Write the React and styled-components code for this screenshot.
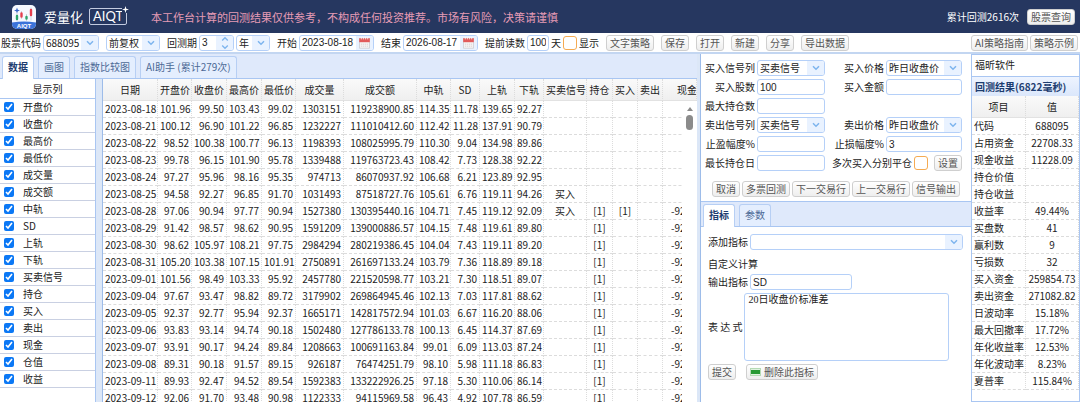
import React from "react"
import styled, { createGlobalStyle, css } from "styled-components"

const navy = "#263760"
const line = "#a9c6f2"
const paleBlue = "#dfe9fb"
const grid = "#dcdcdc"
const sans = `"Noto Sans CJK SC", sans-serif`
const inputFont = `"Liberation Sans", "Noto Sans CJK SC", sans-serif`

const GlobalStyle = createGlobalStyle`
  *, *::before, *::after {
    box-sizing: border-box;
  }

  body {
    margin: 0;
    color: #222;
    background: #fff;
    font: 10px/14px ${sans};
    overflow: hidden;
  }

  button, input, select, textarea {
    margin: 0;
    color: #222;
    font: 10px/14px ${sans};
  }
`

const Page = styled.div`
  display: flex;
  flex-direction: column;
  height: 100vh;
`

const Header = styled.header`
  display: flex;
  flex: none;
  align-items: center;
  height: 33px;
  padding: 0 5px 0 12px;
  color: #fff;
  background: ${navy};
`

const Brand = styled.span`
  margin: 0 6px 0 8px;
  font-size: 13px;
  line-height: 20px;
`

const BrandBox = styled.span`
  position: relative;
  width: 38px;
  height: 17px;
  border: 1px solid #c3cbe0;
  border-radius: 2px;
  font: 13px/15px Lato, sans-serif;
  text-align: center;
`

const Spark = styled.svg`
  position: absolute;
  top: -3px;
  right: -3px;
  background: ${navy};
`

const Warning = styled.p`
  flex: 1;
  margin: 0 0 0 24px;
  color: #e59bb5;
  font-size: 11px;
`

const Count = styled.span`
  margin-right: 8px;
`

const Button = styled.button`
  display: inline-flex;
  flex: none;
  align-items: center;
  justify-content: center;
  gap: 3px;
  height: 16px;
  padding: 0 3px;
  border: 1px solid #cfcfcf;
  border-radius: 3px;
  color: #555;
  background: linear-gradient(#fff, #eee);
  white-space: nowrap;
  cursor: pointer;
`

const Toolbar = styled.div`
  display: flex;
  flex: none;
  align-items: center;
  gap: 7px;
  height: 21px;
  padding: 0 2px 0 1px;
  border-bottom: 2px solid #c3d6f1;
  white-space: nowrap;
`

const Group = styled.div`
  display: flex;
  align-items: center;
  gap: 2px;
`

const Actions = styled(Group)`
  flex: 1;
  gap: 7px;
`

const Field = styled.div`
  position: relative;
  flex: ${props => (props.$width ? "none" : 1)};
  width: ${props => (props.$width ? `${props.$width}px` : "auto")};
  min-width: 0;
  height: 16px;
`

const control = css`
  display: block;
  width: 100%;
  height: 16px;
  padding: 0 2px;
  border: 1px solid #b5d0f8;
  border-radius: 3px;
  outline: 0;
  background: #fff;
`

const Input = styled.input`
  ${control}
  font-family: ${inputFont};
`

const Select = styled.select`
  ${control}
  appearance: none;
`

const Adornment = styled.span`
  position: absolute;
  top: 1px;
  right: 1px;
  bottom: 1px;
  display: flex;
  align-items: center;
  justify-content: center;
  width: 17px;
  border-radius: 0 2px 2px 0;
  background: #e9f2ff;
  pointer-events: none;
`

const OrangeCheck = styled.input`
  appearance: none;
  flex: none;
  width: 14px;
  height: 14px;
  border: 1px solid #f5ab52;
  border-radius: 3px;
  background: #fff;
`

const Main = styled.main`
  display: flex;
  flex: 1;
  min-height: 0;
`

const Workspace = styled.section`
  display: flex;
  flex: 1;
  flex-direction: column;
  min-width: 0;
`

const Tabs = styled.div`
  display: flex;
  flex: none;
  align-items: flex-end;
  gap: 4px;
  height: 25px;
  padding: 0 2px;
  border-bottom: 1px solid ${line};
  background: ${paleBlue};
`

const Tab = styled.button`
  height: ${props => (props.$active ? 23 : 22)}px;
  margin-bottom: ${props => (props.$active ? "-1px" : 0)};
  padding: 0 5px ${props => (props.$active ? 3 : 2)}px;
  border: 1px solid #b7cff4;
  border-bottom: 0;
  border-radius: 3px 3px 0 0;
  color: ${props => (props.$active ? "#1d3d70" : "#4c6a96")};
  background: ${props => (props.$active ? "#fff" : "#e4eefe")};
  font-weight: ${props => (props.$active ? 700 : 400)};
  white-space: nowrap;
  cursor: pointer;
`

const Split = styled.div`
  display: flex;
  flex: 1;
  min-height: 0;
`

const ColumnPicker = styled.div`
  flex: none;
  width: 96px;
  border-right: 1px solid ${line};
`

const PickerTitle = styled.div`
  height: 20px;
  border-bottom: 1px solid ${line};
  line-height: 20px;
  text-align: center;
`

const PickerRow = styled.label`
  display: flex;
  align-items: center;
  gap: 9px;
  height: 17px;
  padding-left: 4px;
  border-bottom: 1px solid #c9d0e2;

  input {
    width: 10px;
    height: 10px;
    accent-color: #0b78f5;
  }
`

const Splitter = styled.div`
  flex: none;
  width: ${props => props.$width}px;
  border-right: 1px solid #9dbce9;
  background: #dce7f7;
`

const TableArea = styled.div`
  position: relative;
  flex: 1;
  min-width: 0;
  overflow: hidden;
`

const Table = styled.table`
  width: 100%;
  border-collapse: separate;
  border-spacing: 0;
  table-layout: fixed;

  th, td {
    overflow: hidden;
    padding: 0 2px;
    border-right: 1px dotted ${grid};
    white-space: nowrap;
  }

  th {
    height: 22px;
    border-bottom: 1px solid #e2e2e2;
    background: linear-gradient(#fafafa, #efefef);
    font-weight: 400;
  }

  td {
    height: 17px;
    border-bottom: 1px dashed ${grid};
    line-height: 16px;
  }
`

const Cell = styled.td`
  text-align: ${props => props.$align};
`

const CashHead = styled.th`
  && {
    padding-left: 14px;
    text-align: left;
  }
`

const CashCell = styled.td`
  && {
    padding-left: 8px;
  }
`

const Scrollbar = styled.div`
  position: absolute;
  top: 22px;
  right: 0;
  bottom: 0;
  display: flex;
  flex-direction: column;
  align-items: center;
  gap: 4px;
  width: 15px;
  padding-top: 6px;
  background: #fff;
`

const Thumb = styled.span`
  width: 7px;
  height: 15px;
  border-radius: 4px;
  background: #8b8b8b;
`

const Center = styled.section`
  display: flex;
  flex: 0 0 25%;
  flex-direction: column;
  min-width: 0;
`

const Form = styled.form`
  display: grid;
  grid-template-columns: 53px 68px 57px 76px;
  align-items: center;
  justify-content: start;
  gap: 3px 2px;
  padding: 6px 8px 0 1px;

  & > label {
    text-align: right;
    white-space: nowrap;
  }
`

const Spread = styled.div`
  grid-column: span 2;
  display: flex;
  align-items: center;
  justify-content: flex-end;
  gap: 2px;

  ${Button} {
    margin-left: 4px;
  }
`

const ButtonRow = styled.div`
  display: flex;
  justify-content: center;
  gap: 2px;
  padding: 10px 0 4px;
`

const Indicator = styled.div`
  display: flex;
  flex: 1;
  flex-direction: column;
  border-top: 1px solid ${line};
`

const IndicatorBody = styled.div`
  display: flex;
  flex-direction: column;
  gap: 3px;
  padding: 7px 8px 0 7px;
`

const Line = styled.div`
  display: flex;
  align-items: center;
  gap: ${props => props.$gap || 2}px;
`

const Caption = styled.div`
  margin-top: 4px;
`

const Expression = styled.textarea`
  display: block;
  width: 205px;
  height: 68px;
  padding: 0 3px;
  border: 1px solid #b5d0f8;
  border-radius: 3px;
  outline: 0;
  font-family: "Liberation Serif", "Noto Sans CJK SC", serif;
  line-height: 12px;
  resize: none;
`

const Results = styled.aside`
  flex: none;
  width: 109px;
  border: 1px solid ${line};
`

const Company = styled.div`
  height: 21px;
  padding: 0 3px;
  line-height: 20px;
`

const ResultTitle = styled.h2`
  height: 20px;
  margin: 0;
  padding: 0 3px;
  border-top: 1px solid ${line};
  color: #1d3d70;
  background: linear-gradient(#eef4ff, #dbe7fb);
  font-size: 10px;
  line-height: 19px;
  white-space: nowrap;
`

const Chevron = () => (
  <Adornment>
    <svg width="8" height="6" viewBox="0 0 8 6" fill="none" stroke="#7db4ee" strokeWidth="1.5">
      <path d="M1 1.2 4 4.2 7 1.2" />
    </svg>
  </Adornment>
)

const Stepper = () => (
  <Adornment>
    <svg width="8" height="14" viewBox="0 0 8 14" fill="none" stroke="#7db4ee" strokeWidth="1.3">
      <path d="M1.2 4.5 4 1.7 6.8 4.5M1.2 9.5 4 12.3 6.8 9.5" />
    </svg>
  </Adornment>
)

const Calendar = () => (
  <Adornment>
    <svg width="11" height="12" viewBox="0 0 11 12">
      <path d="M.5 1.5h10v9.8H.5z" fill="#f5f3f3" stroke="#c9c9cf" strokeWidth=".7" />
      <path d="M.2 1.2h10.6v4H.2z" fill="#e25b5b" />
      <path d="M2.3.2v2.2M4.4.2v2.2M6.6.2v2.2M8.7.2v2.2" stroke="#fff" strokeWidth=".8" />
      <path d="M2 7.2h7M2 9.2h7" stroke="#d6c9cc" strokeWidth=".8" strokeDasharray="1.2 .8" />
    </svg>
  </Adornment>
)

const Logo = () => (
  <svg width="24" height="24" viewBox="0 0 24 24" aria-hidden="true">
    <defs>
      <clipPath id="logo-shape">
        <rect width="24" height="24" rx="5" />
      </clipPath>
    </defs>
    <g clipPath="url(#logo-shape)">
      <rect width="24" height="24" fill="#f6f9ff" />
      <path d="M0 17.5Q12 15.5 24 17.5V24H0z" fill="#3b72d9" />
      <path d="M5 8v8M9.5 6v8M14.5 9v7M19 2.5v13" stroke="#b9b9c6" strokeWidth=".6" />
      <path d="M5 2.5 5.8 4.7 8 5.5 5.8 6.3 5 8.5 4.2 6.3 2 5.5 4.2 4.7z" fill="#3465c9" />
      <g strokeLinecap="round" strokeWidth="2.4">
        <path d="M5 11v3M14.5 12v1.5" stroke="#2da66d" />
        <path d="M9.5 8.5v3M19 5v5" stroke="#e5404f" />
      </g>
      <text x="12" y="22.8" textAnchor="middle" fontFamily="Liberation Sans" fontSize="6" fontWeight="700" fill="#fff">AIQT</text>
    </g>
  </svg>
)

const TextField = ({ id, width, value = "" }) => (
  <Field $width={width}>
    <Input id={id} defaultValue={value} />
  </Field>
)

const SelectField = ({ id, width, value = "", label }) => (
  <Field $width={width}>
    <Select id={id} aria-label={label} defaultValue={value}>
      <option>{value}</option>
    </Select>
    <Chevron />
  </Field>
)

const DateField = ({ id, value }) => (
  <Field $width={75}>
    <Input id={id} defaultValue={value} />
    <Calendar />
  </Field>
)

const pickable = [
  "开盘价", "收盘价", "最高价", "最低价", "成交量", "成交额", "中轨", "SD", "上轨",
  "下轨", "买卖信号", "持仓", "买入", "卖出", "现金", "仓值", "收益",
]

const columns = [
  ["日期", 55], ["开盘价", 34], ["收盘价", 35], ["最高价", 35], ["最低价", 34],
  ["成交量", 48], ["成交额", 73], ["中轨", 34], ["SD", 29], ["上轨", 35],
  ["下轨", 29], ["买卖信号", 43], ["持仓", 26], ["买入", 25], ["卖出", 25],
]

const quotes = `2023-08-18 101.96 99.50 103.43 99.02 1303151 119238900.85 114.35 11.78 139.65 92.27
2023-08-21 100.12 96.90 101.22 96.85 1232227 111010412.60 112.42 11.28 137.91 90.79
2023-08-22 98.52 100.38 100.77 96.13 1198393 108025995.79 110.30 9.04 134.98 89.86
2023-08-23 99.78 96.15 101.90 95.78 1339488 119763723.43 108.42 7.73 128.38 92.22
2023-08-24 97.27 95.96 98.16 95.35 974713 86070937.92 106.68 6.21 123.89 92.95
2023-08-25 94.58 92.27 96.85 91.70 1031493 87518727.76 105.61 6.76 119.11 94.26 买入
2023-08-28 97.06 90.94 97.77 90.94 1527380 130395440.16 104.71 7.45 119.12 92.09 买入 [1] [1]
2023-08-29 91.42 98.57 98.62 90.95 1591209 139000886.57 104.15 7.48 119.61 89.80 - [1]
2023-08-30 98.62 105.97 108.21 97.75 2984294 280219386.45 104.04 7.43 119.11 89.20 - [1]
2023-08-31 105.20 103.38 107.15 101.91 2750891 261697133.24 103.79 7.36 118.89 89.18 - [1]
2023-09-01 101.56 98.49 103.33 95.92 2457780 221520598.77 103.21 7.30 118.51 89.07 - [1]
2023-09-04 97.67 93.47 98.82 89.72 3179902 269864945.46 102.13 7.03 117.81 88.62 - [1]
2023-09-05 92.37 92.77 95.94 92.37 1665171 142817572.94 101.03 6.67 116.20 88.06 - [1]
2023-09-06 93.83 93.14 94.74 90.18 1502480 127786133.78 100.13 6.45 114.37 87.69 - [1]
2023-09-07 93.91 90.17 94.24 89.84 1208663 100691163.84 99.01 6.09 113.03 87.24 - [1]
2023-09-08 89.31 90.18 91.57 89.15 926187 76474251.79 98.10 5.98 111.18 86.83 - [1]
2023-09-11 89.93 92.47 94.52 89.54 1592383 133222926.25 97.18 5.30 110.06 86.14 - [1]
2023-09-12 92.06 91.70 93.48 90.98 1122333 94115969.58 96.43 4.92 107.78 86.59 - [1]`
  .split("\n")
  .map(row => row.split(" "))

const results = [
  ["代码", "688095"], ["占用资金", "22708.33"], ["现金收益", "11228.09"],
  ["持仓价值", ""], ["持仓收益", ""], ["收益率", "49.44%"], ["买盘数", "41"],
  ["赢利数", "9"], ["亏损数", "32"], ["买入资金", "259854.73"],
  ["卖出资金", "271082.82"], ["日波动率", "15.18%"], ["最大回撤率", "17.72%"],
  ["年化收益率", "12.53%"], ["年化波动率", "8.23%"], ["夏普率", "115.84%"],
]

const QuoteTable = () => (
  <TableArea>
    <Table>
      <colgroup>
        {columns.map(([name, width]) => (
          <col key={name} width={width} />
        ))}
        <col />
      </colgroup>
      <thead>
        <tr>
          {columns.map(([name]) => (
            <th key={name}>{name}</th>
          ))}
          <CashHead>现金</CashHead>
        </tr>
      </thead>
      <tbody>
        {quotes.map(row => (
          <tr key={row[0]}>
            {columns.map(([name], i) => (
              <Cell key={name} $align={i > 0 && i < 11 ? "right" : "center"}>
                {row[i] === "-" ? "" : row[i]}
              </Cell>
            ))}
            <CashCell>{row.includes("[1]") && "-92"}</CashCell>
          </tr>
        ))}
      </tbody>
    </Table>
    <Scrollbar>
      <svg width="6" height="4" viewBox="0 0 6 4">
        <path d="M0 4 3 0 6 4z" fill="#8b8b8b" />
      </svg>
      <Thumb />
    </Scrollbar>
  </TableArea>
)

const TradeForm = () => (
  <Form>
    <label htmlFor="buy-signal">买入信号列</label>
    <SelectField id="buy-signal" value="买卖信号" />
    <label htmlFor="buy-price">买入价格</label>
    <SelectField id="buy-price" value="昨日收盘价" />

    <label htmlFor="buy-shares">买入股数</label>
    <TextField id="buy-shares" value="100" />
    <label htmlFor="buy-amount">买入金额</label>
    <TextField id="buy-amount" />

    <label htmlFor="max-hold">最大持仓数</label>
    <TextField id="max-hold" />
    <span />
    <span />

    <label htmlFor="sell-signal">卖出信号列</label>
    <SelectField id="sell-signal" value="买卖信号" />
    <label htmlFor="sell-price">卖出价格</label>
    <SelectField id="sell-price" value="昨日收盘价" />

    <label htmlFor="take-profit">止盈幅度%</label>
    <TextField id="take-profit" />
    <label htmlFor="stop-loss">止损幅度%</label>
    <TextField id="stop-loss" value="3" />

    <label htmlFor="max-days">最长持仓日</label>
    <TextField id="max-days" />
    <Spread>
      <label htmlFor="split-close">多次买入分别平仓</label>
      <OrangeCheck id="split-close" type="checkbox" />
      <Button type="button">设置</Button>
    </Spread>
  </Form>
)

const App = () => {
  return (
    <Page>
      <GlobalStyle />
      <Header>
        <Logo />
        <Brand>爱量化</Brand>
        <BrandBox>
          AIQT
          <Spark width="7" height="7" viewBox="0 0 7 7">
            <path d="M3.5 0 4.3 2.7 7 3.5 4.3 4.3 3.5 7 2.7 4.3 0 3.5 2.7 2.7z" fill="#fff" />
          </Spark>
        </BrandBox>
        <Warning>本工作台计算的回测结果仅供参考，不构成任何投资推荐。市场有风险，决策请谨慎</Warning>
        <Count>累计回测2616次</Count>
        <Button>股票查询</Button>
      </Header>

      <Toolbar>
        <Group>
          <label htmlFor="code">股票代码</label>
          <SelectField id="code" width={56} value="688095" />
        </Group>
        <SelectField width={54} value="前复权" label="复权" />
        <Group>
          <label htmlFor="period">回测期</label>
          <Field $width={35}>
            <Input id="period" defaultValue="3" />
            <Stepper />
          </Field>
          <SelectField width={34} value="年" label="单位" />
        </Group>
        <Group>
          <label htmlFor="start">开始</label>
          <DateField id="start" value="2023-08-18" />
        </Group>
        <Group>
          <label htmlFor="end">结束</label>
          <DateField id="end" value="2026-08-17" />
        </Group>
        <Group>
          <label htmlFor="lead">提前读数</label>
          <TextField id="lead" width={22} value="100" />
          <span>天</span>
          <OrangeCheck id="show" type="checkbox" />
          <label htmlFor="show">显示</label>
        </Group>
        <Actions>
          {["文字策略", "保存", "打开", "新建", "分享", "导出数据"].map(name => (
            <Button key={name}>{name}</Button>
          ))}
        </Actions>
        <Group>
          <Button>AI策略指南</Button>
          <Button>策略示例</Button>
        </Group>
      </Toolbar>

      <Main>
        <Workspace>
          <Tabs>
            <Tab $active>数据</Tab>
            <Tab>画图</Tab>
            <Tab>指数比较图</Tab>
            <Tab>AI助手 (累计279次)</Tab>
          </Tabs>
          <Split>
            <ColumnPicker>
              <PickerTitle>显示列</PickerTitle>
              {pickable.map(name => (
                <PickerRow key={name}>
                  <input type="checkbox" defaultChecked />
                  {name}
                </PickerRow>
              ))}
            </ColumnPicker>
            <Splitter $width={7} />
            <QuoteTable />
          </Split>
        </Workspace>
        <Splitter $width={4} />

        <Center>
          <TradeForm />
          <ButtonRow>
            {["取消", "多票回测", "下一交易行", "上一交易行", "信号输出"].map(name => (
              <Button key={name}>{name}</Button>
            ))}
          </ButtonRow>
          <Indicator>
            <Tabs>
              <Tab $active>指标</Tab>
              <Tab>参数</Tab>
            </Tabs>
            <IndicatorBody>
              <Line>
                <label htmlFor="add">添加指标</label>
                <SelectField id="add" />
              </Line>
              <Caption>自定义计算</Caption>
              <Line>
                <label htmlFor="output">输出指标</label>
                <TextField id="output" width={102} value="SD" />
              </Line>
              <Line>
                <label htmlFor="expression">表 达 式</label>
                <Expression id="expression" defaultValue="20日收盘价标准差" />
              </Line>
              <Line $gap={10}>
                <Button>提交</Button>
                <Button>
                  <svg width="11" height="8" viewBox="0 0 11 8">
                    <rect x=".5" y=".5" width="10" height="7" fill="#dff2df" stroke="#b5dab5" />
                    <rect x="1" y="2" width="9" height="4" fill="#279a33" />
                  </svg>
                  删除此指标
                </Button>
              </Line>
            </IndicatorBody>
          </Indicator>
        </Center>

        <Results>
          <Company>福昕软件</Company>
          <ResultTitle>回测结果(6822毫秒)</ResultTitle>
          <Table>
            <colgroup>
              <col width="54" />
              <col />
            </colgroup>
            <thead>
              <tr>
                <th>项目</th>
                <th>值</th>
              </tr>
            </thead>
            <tbody>
              {results.map(([name, value]) => (
                <tr key={name}>
                  <Cell $align="left">{name}</Cell>
                  <Cell $align="center">{value}</Cell>
                </tr>
              ))}
            </tbody>
          </Table>
        </Results>
      </Main>
    </Page>
  )
}

export default App
